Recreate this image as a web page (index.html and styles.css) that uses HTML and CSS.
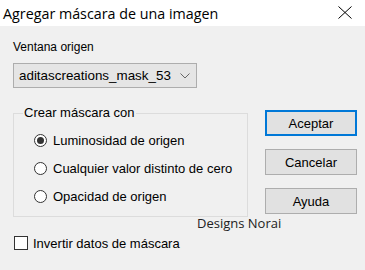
FILE: index.html
```html
<!DOCTYPE html>
<html>
  <head>
    <meta charset="utf-8" />
    <link rel="stylesheet" href="styles.css">
  </head>

  <body>
    <div class="dialog">
      <div class="titlebar">
        <span class="title">Agregar máscara de una imagen</span>
        <svg class="close" width="14" height="13" viewBox="0 0 14 13">
          <path d="M0.5 0.5 L13.5 12.5 M13.5 0.5 L0.5 12.5" stroke="#000" stroke-width="1" fill="none" />
        </svg>
      </div>

      <div class="content">
        <div class="left">
          <div class="label">Ventana origen</div>
          <div class="combo">
            <span>aditascreations_mask_53</span>
            <svg class="chevron" width="10" height="6" viewBox="0 0 10 6">
              <path d="M0.5 0.5 L5 5 L9.5 0.5" stroke="#666" stroke-width="1" fill="none" />
            </svg>
          </div>

          <fieldset class="group">
            <legend>Crear máscara con</legend>
            <div class="radio-row">
              <span class="radio checked"></span>Luminosidad de origen
            </div>
            <div class="radio-row">
              <span class="radio"></span>Cualquier valor distinto de cero
            </div>
            <div class="radio-row">
              <span class="radio"></span>Opacidad de origen
            </div>
          </fieldset>

          <div class="check-row">
            <span class="checkbox"></span>Invertir datos de máscara
          </div>
        </div>

        <div class="buttons">
          <div class="btn default">Aceptar</div>
          <div class="btn">Cancelar</div>
          <div class="btn">Ayuda</div>
        </div>
      </div>

      <div class="watermark">Designs Norai</div>
    </div>
  </body>
</html>
```

FILE: styles.css
```css
body {
  margin: 0;
  font-family: "Liberation Sans", Arial, sans-serif;
  font-size: 12px;
  color: #000;
}

.dialog {
  position: relative;
  width: 365px;
  height: 270px;
  background-color: #f0f0f0;
}

.titlebar {
  height: 26px;
  background-color: #fff;
  display: flex;
  align-items: center;
  justify-content: space-between;
  padding: 0 13px 0 3px;
}

.title {
  font-family: "Open Sans", sans-serif;
  font-size: 14.3px;
  color: #000;
}

.close {
  margin-top: -2px;
}

.content {
  display: flex;
  padding: 13px 0 0 13px;
}

.left {
  width: 235px;
}

.label {
  height: 16px;
  line-height: 16px;
}

.combo {
  margin-top: 8px;
  height: 23px;
  width: 171px;
  border: 1px solid #adadad;
  background-color: #e5e5e5;
  display: flex;
  align-items: center;
  justify-content: space-between;
  padding: 0 6px 0 5px;
  font-size: 13.4px;
}

.group {
  margin: 17px 0 0 0;
  padding: 5px 0 0 8px;
  border: 1px solid #dcdcdc;
  height: 112px;
  box-sizing: border-box;
  min-width: 0;
}

.group legend {
  padding: 0 1px;
  margin-left: 1px;
  font-size: 13px;
  line-height: 16px;
}

.radio-row {
  display: flex;
  align-items: center;
  height: 28px;
  margin-left: 12px;
  font-size: 13px;
}

.radio {
  width: 11px;
  height: 11px;
  border: 1px solid #333;
  border-radius: 50%;
  background-color: #fff;
  margin-right: 6px;
  display: flex;
  align-items: center;
  justify-content: center;
}

.radio.checked::after {
  content: "";
  width: 7px;
  height: 7px;
  border-radius: 50%;
  background-color: #333;
}

.check-row {
  display: flex;
  align-items: center;
  height: 14px;
  margin-top: 19px;
  font-size: 13px;
}

.checkbox {
  width: 12px;
  height: 12px;
  border: 1px solid #333;
  background-color: #fff;
  margin: 0 5px 0 1px;
}

.buttons {
  display: flex;
  flex-direction: column;
  gap: 13px;
  margin-left: 17px;
  padding-top: 71px;
}

.btn {
  width: 90px;
  height: 24px;
  border: 1px solid #adadad;
  background-color: #e1e1e1;
  display: flex;
  align-items: center;
  justify-content: center;
  font-size: 13px;
}

.btn.default {
  border: 2px solid #0078d7;
  width: 88px;
  height: 22px;
}

.watermark {
  position: absolute;
  left: 197px;
  top: 214px;
  font-family: "Open Sans", sans-serif;
  font-size: 13px;
  color: #222;
}
```
